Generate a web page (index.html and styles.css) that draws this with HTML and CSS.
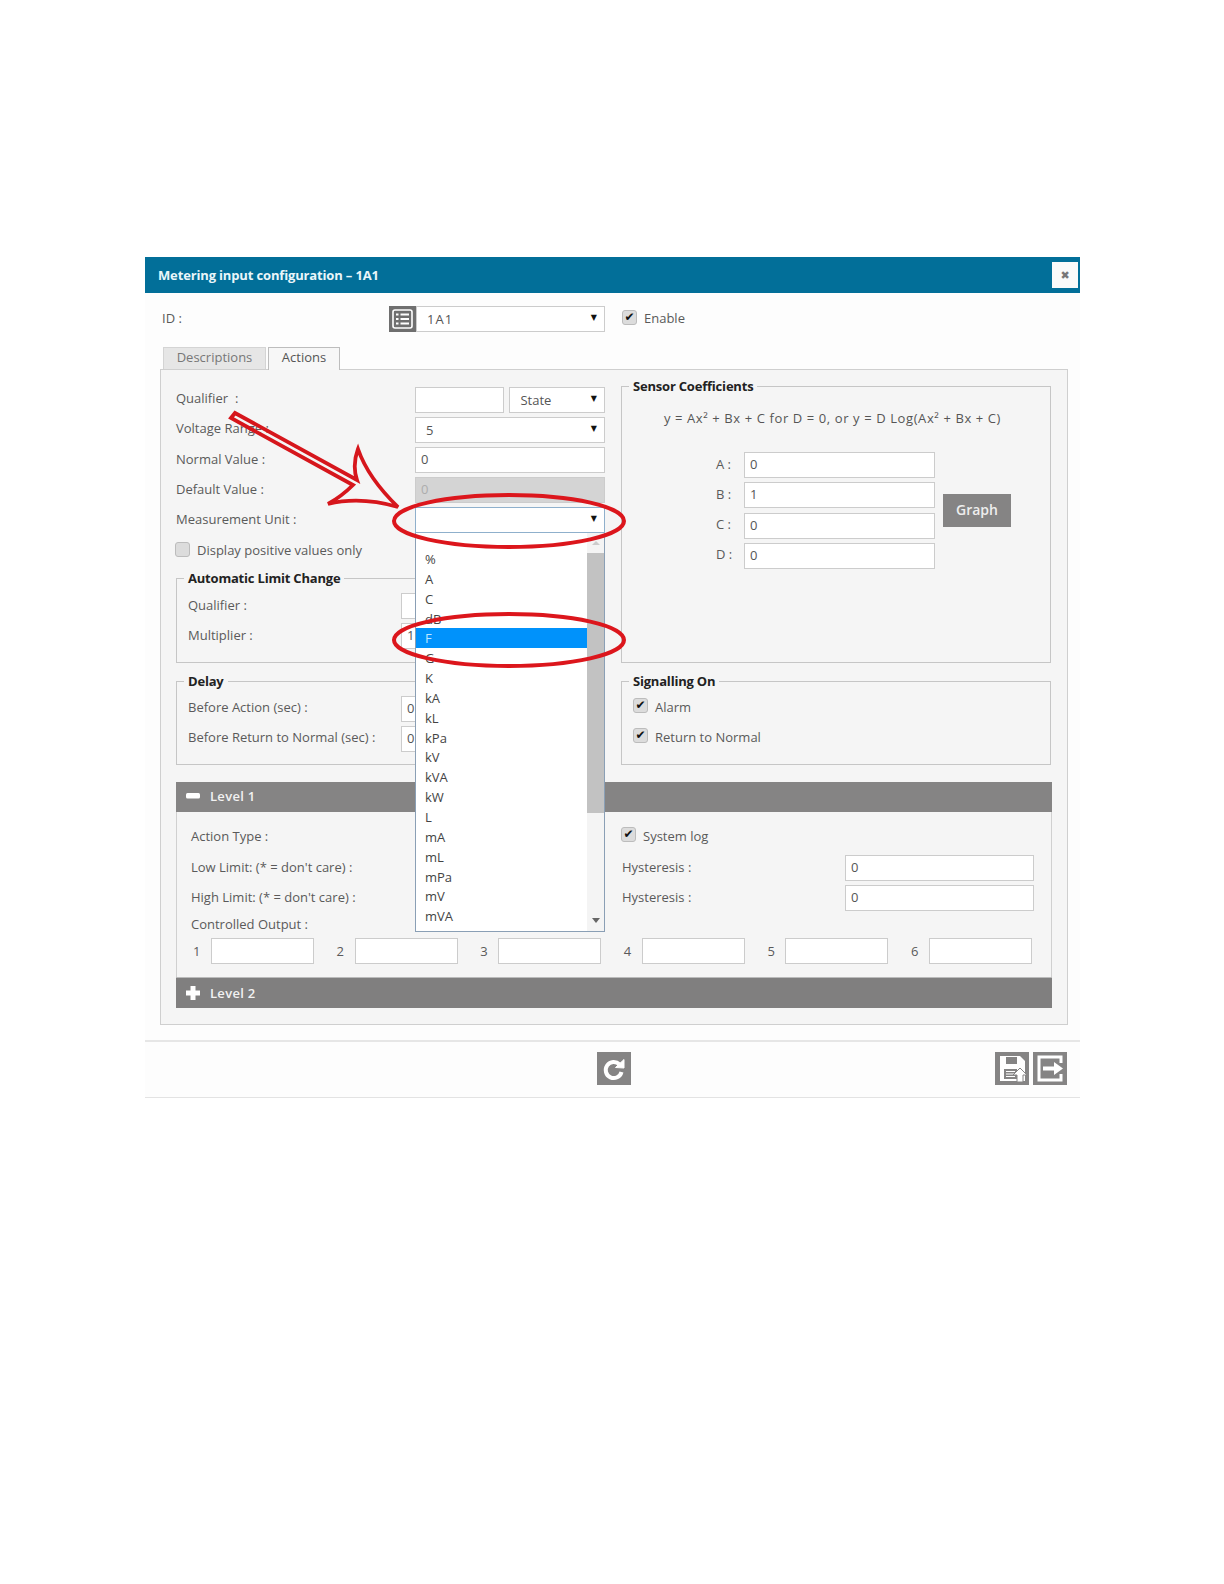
FILE: index.html
```html
<!DOCTYPE html>
<html lang="en">
<head>
<meta charset="utf-8">
<title>Metering input configuration</title>
<link rel="stylesheet" href="styles.css">
</head>
<body>
<div class="page">
  <div class="dialog">
    <header class="titlebar">
      <span class="title">Metering input configuration – 1A1</span>
      <span class="close">✖</span>
    </header>

    <div class="id-row">
      <span class="id-label">ID :</span>
      <span class="icon-btn">
        <svg width="27" height="26" viewBox="0 0 27 26"><rect x="4" y="4" width="19" height="18" rx="2" fill="none" stroke="#fff" stroke-width="1.6"/><path d="M7 8.5h2.5M7 13h2.5M7 17.500h2.500M11.500 8.500H20M11.500 13H20M11.500 17.500H20" stroke="#fff" stroke-width="2" fill="none"/></svg>
      </span>
      <div class="select id-select"><span class="spaced">1A1</span><span class="caret">▼</span></div>
      <label class="check enable"><span class="box">✔</span>Enable</label>
    </div>

    <nav class="tabs">
      <span class="tab">Descriptions</span>
      <span class="tab active">Actions</span>
    </nav>

    <section class="panel">
      <div class="cols">
        <div class="left-col">
          <div class="row top-row"><span class="lab">Qualifier &nbsp;:</span><input class="input qual" type="text"><div class="select state">State<span class="caret">▼</span></div></div>
          <div class="row top-row"><span class="lab">Voltage Range :</span><div class="select wide">5<span class="caret">▼</span></div></div>
          <div class="row"><span class="lab">Normal Value :</span><input class="input wide" type="text" value="0"></div>
          <div class="row"><span class="lab">Default Value :</span><input class="input wide" type="text" value="0" disabled></div>
          <div class="row"><span class="lab">Measurement Unit :</span>
            <div class="select wide focus"><span class="caret">▼</span>
              <div class="dropdown">
                <ul class="options">
                  <li>%</li><li>A</li><li>C</li><li>dB</li><li class="sel">F</li><li>G</li><li>K</li><li>kA</li><li>kL</li><li>kPa</li><li>kV</li><li>kVA</li><li>kW</li><li>L</li><li>mA</li><li>mL</li><li>mPa</li><li>mV</li><li>mVA</li>
                </ul>
                <div class="scroll"><span class="sc-arrow up"></span><span class="thumb"></span><span class="sc-arrow down"></span></div>
              </div>
            </div>
          </div>
          <label class="check positive"><span class="box"></span>Display positive values only</label>

          <fieldset class="group auto">
            <legend>Automatic Limit Change</legend>
            <div class="row"><span class="lab2">Qualifier :</span><input class="input grow" type="text"></div>
            <div class="row"><span class="lab2">Multiplier :</span><input class="input grow" type="text" value="1"></div>
          </fieldset>
          <fieldset class="group delay">
            <legend>Delay</legend>
            <div class="row"><span class="lab2">Before Action (sec) :</span><input class="input grow" type="text" value="0"></div>
            <div class="row"><span class="lab2">Before Return to Normal (sec) :</span><input class="input grow" type="text" value="0"></div>
          </fieldset>
        </div>

        <div class="right-col">
          <fieldset class="group sensor">
            <legend>Sensor Coefficients</legend>
            <p class="formula">y = Ax² + Bx + C for D = 0, or y = D Log(Ax² + Bx + C)</p>
            <div class="coef">
              <div class="coef-rows">
                <div class="coef-row"><span class="coef-lab">A :</span><input class="input coef-in" type="text" value="0"></div>
                <div class="coef-row"><span class="coef-lab">B :</span><input class="input coef-in" type="text" value="1"></div>
                <div class="coef-row"><span class="coef-lab">C :</span><input class="input coef-in" type="text" value="0"></div>
                <div class="coef-row"><span class="coef-lab">D :</span><input class="input coef-in" type="text" value="0"></div>
              </div>
              <span class="graph">Graph</span>
            </div>
          </fieldset>
          <fieldset class="group signal">
            <legend>Signalling On</legend>
            <label class="check"><span class="box">✔</span>Alarm</label>
            <label class="check"><span class="box">✔</span>Return to Normal</label>
          </fieldset>
        </div>
      </div>

      <div class="level-head">
        <svg width="14" height="6" viewBox="0 0 14 6"><rect width="14" height="5.500" rx="1.500" fill="#fff"/></svg>
        <span>Level 1</span>
      </div>
      <div class="level-body">
        <div class="lv-row"><span class="lv-lab first">Action Type :</span><label class="check syslog"><span class="box">✔</span>System log</label></div>
        <div class="lv-row"><span class="lv-lab">Low Limit: (* = don't care) :</span><span class="hy-lab">Hysteresis :</span><input class="input hy-in" type="text" value="0"></div>
        <div class="lv-row"><span class="lv-lab">High Limit: (* = don't care) :</span><span class="hy-lab">Hysteresis :</span><input class="input hy-in" type="text" value="0"></div>
        <div class="out-title">Controlled Output :</div>
        <div class="outputs">
          <div class="out"><span class="out-n">1</span><input class="input out-in" type="text"></div>
          <div class="out"><span class="out-n">2</span><input class="input out-in" type="text"></div>
          <div class="out"><span class="out-n">3</span><input class="input out-in" type="text"></div>
          <div class="out"><span class="out-n">4</span><input class="input out-in" type="text"></div>
          <div class="out"><span class="out-n">5</span><input class="input out-in" type="text"></div>
          <div class="out"><span class="out-n">6</span><input class="input out-in" type="text"></div>
        </div>
      </div>
      <div class="level-head collapsed">
        <svg width="14" height="14" viewBox="0 0 14 14"><path d="M5 0h4v5h5v4H9v5H5V9H0V5h5z" fill="#fff" stroke="#fff" stroke-linejoin="round"/></svg>
        <span>Level 2</span>
      </div>
    </section>

    <footer class="footer">
      <span></span>
      <span class="tool">
        <svg width="34" height="33" viewBox="0 0 34 33"><path d="M22.500 12.500A8 8 0 1 0 24.500 20" fill="none" stroke="#fff" stroke-width="4"/><path d="M18.500 15.500L27 7.500V16z" fill="#fff" stroke="#fff" stroke-linejoin="round"/></svg>
      </span>
      <span class="tool-right">
        <span class="tool">
          <svg width="34" height="33" viewBox="0 0 34 33"><path d="M5 4h20l5 5v20H5z" fill="#fff"/><rect x="11" y="5" width="11" height="7" fill="#858484"/><rect x="9" y="17" width="13" height="10" fill="#858484"/><path d="M11 19.500h9M11 22h9M11 24.500h9" stroke="#fff"/><path d="M18 23l7-7 7 7h-4v7h-6v-7z" fill="#fff" stroke="#858484"/></svg>
        </span>
        <span class="tool">
          <svg width="34" height="33" viewBox="0 0 34 33"><path d="M28 11V5H6v23h22v-6" fill="none" stroke="#fff" stroke-width="3"/><path d="M10 14.500h11V10l9 6.500-9 6.500v-4.500H10z" fill="#fff"/></svg>
        </span>
      </span>
    </footer>
  </div>

  <svg class="markup" width="1224" height="1584" viewBox="0 0 1224 1584">
    <path d="M235 413L357 480Q352 465 358 449Q368 478 398 507Q360 496 328 504Q342 496 353 485L231 418Z" fill="none" stroke="#d6161c" stroke-width="3.800" stroke-linejoin="miter"/>
    <ellipse cx="509" cy="521" rx="115" ry="26" fill="none" stroke="#dc161c" stroke-width="4"/>
    <ellipse cx="509" cy="640" rx="115" ry="26" fill="none" stroke="#dc161c" stroke-width="4"/>
  </svg>
</div>
</body>
</html>
```
FILE: styles.css
```css
* { box-sizing: border-box; }
html, body { margin: 0; background: #fff; }
body { font: 13px/18px "Open Sans", "Liberation Sans", sans-serif; color: #5a5a5a; }

.page { position: relative; height: 1584px; padding: 257px 0 0 145px; overflow: hidden; }
.markup { position: absolute; left: 0; top: 0; z-index: 5; pointer-events: none; }

.dialog { width: 935px; height: 841px; background: #fdfdfd; border-bottom: 1px solid #e3e3e3; }

.titlebar { display: flex; align-items: center; justify-content: space-between; height: 36px; background: #026f99; padding: 0 2px 0 13px; }
.title { color: #eaf6fa; font-weight: 700; font-size: 13px; letter-spacing: -0.15px; }
.close { display: flex; align-items: center; justify-content: center; width: 26px; height: 26px; background: #fafafa; color: #777; font: 11px "DejaVu Sans", sans-serif; }

.id-row { display: flex; align-items: center; margin-top: 13px; height: 26px; padding-left: 17px; }
.id-label { width: 227px; padding-bottom: 2px; }
.icon-btn { display: flex; width: 27px; height: 26px; background: #6f6f6f; }
.spaced { letter-spacing: 1px; }
.enable { margin-left: 17px; padding-bottom: 2px; gap: 5px; }

.select { position: relative; display: flex; align-items: center; height: 26px; padding: 0 10px; background: #fff; border: 1px solid #ccc; color: #555; }
.caret { position: absolute; right: 7px; top: 2px; color: #111; font: 8px/18px "DejaVu Sans", sans-serif; }
.id-select { width: 189px; }
.select.focus { border-color: #8fb0cc; }

.input { height: 26px; padding: 0 5px 2px; border: 1px solid #ccc; background: #fff; font: inherit; color: #555; outline: 0; min-width: 0; }
.input:disabled { background: #d4d4d4; color: #adadad; }

.tabs { display: flex; gap: 2px; margin: 15px 0 -1px 18px; position: relative; height: 23px; }
.tab { display: flex; align-items: center; justify-content: center; width: 103px; height: 22px; padding-bottom: 4px; background: #e6e6e6; border: 1px solid #d4d4d4; border-bottom: 0; color: #777; }
.tab.active { width: 72px; height: 23px; padding-bottom: 5px; background: #f7f7f7; border-color: #bdbdbd; color: #555; }

.panel { width: 908px; height: 656px; margin-left: 15px; padding: 8px 15px 0; background: #f5f5f5; border: 1px solid #cfcfcf; }
.cols { display: grid; grid-template-columns: 429px 430px; column-gap: 16px; }
.left-col { display: flex; flex-direction: column; padding-top: 9px; }
.right-col { display: flex; flex-direction: column; gap: 10px; }

.row { display: flex; align-items: center; height: 26px; margin-bottom: 4px; }
.lab { width: 239px; flex: none; padding-bottom: 3px; }
.top-row .lab { padding-bottom: 5px; }
.lab2 { width: 213px; flex: none; padding-bottom: 3px; }
.delay .lab2 { padding-bottom: 5px; }
.qual { width: 90px; }
.state { width: 96px; margin-left: 5px; }
.wide { width: 190px; }
.grow { flex: 1; }

.check { display: flex; align-items: center; gap: 7px; }
.box { display: flex; align-items: center; justify-content: center; width: 15px; height: 15px; margin-bottom: 2px; flex: none; background: #dcdcdc; border: 1px solid #bcbcbc; border-radius: 3px; color: #111; font: 12px/13px "DejaVu Sans", sans-serif; }
.positive { height: 24px; margin: 0 0 9px -1px; padding-top: 2px; }

.group { margin: 0; padding: 0; min-width: 0; border: 1px solid #c6c6c6; }
.group legend { margin-left: 7px; padding: 0 4px; color: #222; font-weight: 700; line-height: 16px; letter-spacing: -0.2px; }
.auto { height: 93px; padding: 7px 0 0 11px; }
.delay { height: 92px; margin-top: 10px; padding: 7px 0 0 11px; }
.auto legend, .delay legend, .signal legend { margin-left: -4px; }
.sensor { flex: 1; }
.signal { height: 92px; padding: 7px 0 0 11px; display: flex; flex-direction: column; gap: 9px; }
.signal .check { height: 21px; }

.formula { margin: 15px 7px 0 0; text-align: center; color: #555; letter-spacing: 0.6px; }
.coef { display: flex; align-items: center; gap: 8px; margin: 25px 0 0 94px; }
.coef-rows { display: flex; flex-direction: column; gap: 4.300px; }
.coef-row { display: flex; align-items: center; }
.coef-lab { width: 28px; flex: none; padding-bottom: 3px; }
.coef-in { width: 191px; }
.graph { display: flex; align-items: center; justify-content: center; width: 68px; height: 33px; background: #858484; color: #eee; font-weight: 600; font-size: 14px; }

.level-head { display: flex; align-items: center; gap: 10px; width: 876px; height: 30px; margin-top: 17px; padding: 0 0 2px 10px; background: #858484; color: #f2f2f2; font-weight: 600; letter-spacing: 0.3px; }
.level-head svg { width: 14px; flex: none; }
.level-head.collapsed { height: 31px; margin-top: 0; padding-bottom: 0; background: #807f7f; border-top: 1px solid #bbb; }
.level-body { width: 876px; height: 165px; padding: 12.500px 0 0 14px; border: solid #d0d0d0; border-width: 0 1px; }
.lv-row { display: flex; align-items: center; height: 26px; margin-bottom: 4.300px; }
.lv-lab { width: 431px; flex: none; padding-bottom: 2px; }
.lv-lab.first { padding-bottom: 4px; }
.hy-lab { width: 223px; flex: none; padding-bottom: 2px; }
.hy-in { width: 189px; }
.syslog { padding-bottom: 4px; margin-left: -1px; }
.out-title { margin-top: 2px; height: 18px; }
.outputs { display: flex; gap: 19.600px; margin: 5px 0 0 -1px; }
.out { display: flex; align-items: center; }
.out-n { width: 21px; padding-left: 3px; flex: none; }
.out-in { width: 103px; }

.footer { display: grid; grid-template-columns: 1fr auto 1fr; align-items: center; height: 58px; margin-top: 15px; padding: 0 13px 4px 16px; border-top: 2px solid #e6e6e6; }
.tool { display: flex; width: 34px; height: 33px; background: #858484; }
.tool-right { display: flex; gap: 4px; justify-self: end; }

.dropdown { position: absolute; left: -1px; top: 25px; display: flex; justify-content: space-between; width: 190px; height: 399px; background: #fff; border: 1px solid #8a9fb5; border-top: 0; z-index: 2; }
.options { margin: 0; padding: 16px 0 0; list-style: none; width: 171px; flex: none; }
.options li { height: 19.850px; line-height: 20px; padding-left: 9px; color: #444; }
.options li.sel { background: #0092fb; color: #bfe6ff; }
.scroll { display: flex; flex-direction: column; align-items: center; width: 17px; background: #f4f4f4; }
.thumb { width: 100%; height: 260px; background: #c2c2c2; }
.sc-arrow { width: 0; height: 0; border: 4px solid transparent; }
.sc-arrow.up { margin: 8px 0 8px; border-top: 0; border-bottom: 4px solid #ccc; }
.sc-arrow.down { margin-top: 105px; border-bottom: 0; border-top: 5px solid #666; }
```
